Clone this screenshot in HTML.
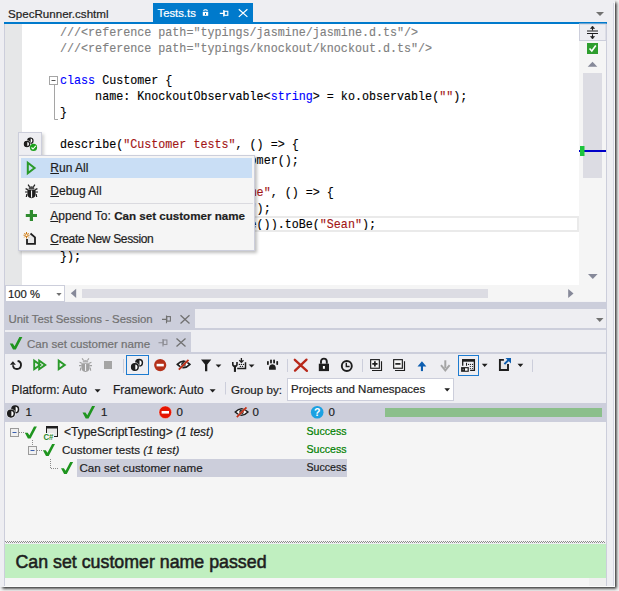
<!DOCTYPE html>
<html><head><meta charset="utf-8">
<style>
*{margin:0;padding:0;box-sizing:border-box}
html,body{width:619px;height:591px;overflow:hidden;background:#F4F4F4}
body{position:relative;font-family:"Liberation Sans",sans-serif;font-size:12px;color:#1E1E1E}
.a{position:absolute}
.t{position:absolute;white-space:pre;line-height:1;-webkit-text-stroke:0.2px currentColor}
.code{position:absolute;left:59.5px;font-family:"Liberation Mono",monospace;font-size:13.5px;transform:scaleX(0.8667);transform-origin:0 0;-webkit-text-stroke:0.15px currentColor;white-space:pre;line-height:16px;color:#000}
.cm{color:#808080}.kw{color:#0000FF}.st{color:#A31515}
svg{position:absolute;overflow:visible}
</style></head><body>
<div class="a" style="left:0;top:0;width:615px;height:587px;background:#EEEEF2;box-shadow:1.5px 1.5px 3px rgba(0,0,0,0.88)"></div>

<!-- document tab bar -->
<div class="t" style="left:8px;top:8px;font-size:11.6px;color:#1E1E1E">SpecRunner.cshtml</div>
<div class="a" style="left:153px;top:3px;width:100px;height:20px;background:#007ACC"></div>
<div class="t" style="left:157.5px;top:8px;font-size:11.3px;color:#fff">Tests.ts</div>
<div class="a" style="left:4px;top:22px;width:603px;height:2px;background:#007ACC"></div>
<svg style="left:596px;top:12px" width="8" height="4"><path d="M0 0H8L4 4Z" fill="#717171"/></svg>

<!-- editor -->
<div class="a" style="left:4px;top:24px;width:1px;height:277px;background:#CCCEDB"></div>
<div class="a" style="left:5px;top:24px;width:17px;height:261px;background:#E6E7E8"></div>
<div class="a" style="left:22px;top:24px;width:557px;height:261px;background:#fff"></div>
<div class="code" style="top:24.5px"><span class="cm">///&lt;reference path="typings/jasmine/jasmine.d.ts"/&gt;</span>
<span class="cm">///&lt;reference path="typings/knockout/knockout.d.ts"/&gt;</span>

<span class="kw">class</span> Customer {
     name: KnockoutObservable&lt;<span class="kw">string</span>&gt; = ko.observable(<span class="st">""</span>);
}

describe(<span class="st">"Customer tests"</span>, () =&gt; {
    <span class="kw">var</span> customer = <span class="kw">new</span> Customer();

    it(<span class="st">"Can set customer name"</span>, () =&gt; {
        customer.name(<span class="st">"Sean"</span>);
        expect(customer.name()).toBe(<span class="st">"Sean"</span>);
    });
});
</div>

<!-- vertical scrollbar -->
<div class="a" style="left:579px;top:24px;width:27px;height:277px;background:#F5F5F5"></div>
<div class="a" style="left:606px;top:24px;width:1px;height:330px;background:#CCCEDB"></div>

<!-- horizontal bar -->

<!-- tool window header -->
<div class="a" style="left:5px;top:301.5px;width:601px;height:7.5px;background:#CCCEDB"></div>
<div class="a" style="left:5px;top:309px;width:190px;height:21px;background:#CCCEDB"></div>
<div class="a" style="left:195px;top:328px;width:411px;height:2px;background:#CCCEDB"></div>
<div class="t" style="left:8.5px;top:314px;font-size:11.4px;color:#717171">Unit Test Sessions - Session</div>
<div class="a" style="left:5px;top:332px;width:186px;height:20px;background:#CCCEDB"></div>
<div class="a" style="left:5px;top:352px;width:601px;height:2px;background:#CCCEDB"></div>
<div class="t" style="left:27px;top:338px;font-size:11.6px;color:#717171">Can set customer name</div>

<!-- toolbar row 2 -->
<div class="t" style="left:11.5px;top:384px;font-size:12px">Platform: Auto</div>
<div class="t" style="left:113px;top:384px;font-size:12px">Framework: Auto</div>
<div class="t" style="left:231px;top:384px;font-size:11.6px">Group by:</div>
<div class="a" style="left:287px;top:378px;width:167px;height:23px;background:#fff;border:1px solid #CCCEDB"></div>
<div class="t" style="left:291px;top:384px;font-size:11.5px">Projects and Namespaces</div>

<!-- status bar -->
<div class="a" style="left:5px;top:403px;width:601px;height:19.5px;background:#CCCEDB"></div>
<div class="a" style="left:385px;top:408px;width:217px;height:9px;background:#8BBF8B"></div>

<!-- tree -->
<div class="a" style="left:5px;top:422px;width:601px;height:119px;background:#F5F5F5"></div>
<div class="a" style="left:77px;top:459px;width:270px;height:18px;background:#CCCEDB"></div>
<div class="t" style="left:64px;top:426px;font-size:12px">&lt;TypeScriptTesting&gt; <i>(1 test)</i></div>
<div class="t" style="left:62px;top:444px;font-size:11.6px">Customer tests <i>(1 test)</i></div>
<div class="t" style="left:79.5px;top:462px;font-size:11.6px">Can set customer name</div>
<div class="t" style="left:306.5px;top:426px;font-size:10.6px;color:#008000">Success</div>
<div class="t" style="left:306.5px;top:444px;font-size:10.6px;color:#008000">Success</div>
<div class="t" style="left:306.5px;top:462px;font-size:10.6px;color:#1E1E1E">Success</div>

<!-- bottom -->
<svg style="left:5px;top:541px" width="600" height="2.5"><defs><pattern id="dotpat" width="2" height="2" patternUnits="userSpaceOnUse"><rect width="2" height="2" fill="#F5F5F5"/><rect x="0" y="0" width="1" height="1" fill="#8A8A8A"/><rect x="1" y="1" width="1" height="1" fill="#8A8A8A"/></pattern></defs><rect width="600" height="2" fill="url(#dotpat)"/></svg>
<div class="a" style="left:5px;top:543.5px;width:601px;height:34.5px;background:#C0EFC0"></div>
<div class="t" style="left:15.5px;top:554px;font-size:17.8px;-webkit-text-stroke:0.55px #1E1E1E;color:#1E1E1E">Can set customer name passed</div>
<div class="a" style="left:5px;top:578px;width:601px;height:8.5px;background:#F5F5F5"></div>
<div class="a" style="left:589px;top:578px;width:17px;height:8.5px;background:#EFEFEF"></div>
<div class="a" style="left:606px;top:354px;width:1px;height:233px;background:#CCCEDB"></div>
<div class="a" style="left:4px;top:301px;width:1px;height:286px;background:#CCCEDB"></div>


<!-- ICON LAYER 1 -->
<svg style="left:0;top:0" width="619" height="591" viewBox="0 0 619 591">
<defs>
 <path id="chk" d="M0 6.2H2.9L4.6 8.8L9.2 0H12.1L5.8 11.9H3.1Z" fill="#1F951F"/>
 <g id="bug">
  <path d="M3.1 0.7L4.6 2.9M9.9 0.7L8.4 2.9M0.6 4.6L2.8 5.6M12.4 4.6L10.2 5.6M0 8H2.6M13 8H10.4M1.3 13L1.9 10M11.7 13L11.1 10" stroke="currentColor" stroke-width="1.2" fill="none"/>
  <path d="M3.6 5A2.9 2.7 0 0 1 9.4 5Z" fill="currentColor" opacity="0.8"/>
  <path d="M2.4 5.6H10.6V9.6Q10.6 14.2 6.5 14.3Q2.4 14.2 2.4 9.6Z" fill="currentColor"/>
 </g>
 <g id="circ">
  <circle cx="0" cy="0" r="3.3" fill="#fff" stroke="#1E1E1E" stroke-width="1.5"/>
  <path d="M0.4 -3.6A3.6 3.6 0 0 0 0.4 3.6Z" fill="#1E1E1E"/>
 </g>
 <g id="circs">
  <use href="#circ" x="4.2" y="-4.2"/>
  <circle cx="0" cy="0" r="4.7" fill="#fff" opacity="0.75"/>
  <use href="#circ" x="0" y="0"/>
 </g>
</defs>
<!-- tab icons -->
<path d="M203.5 10.8A2.2 1.8 0 0 1 207.5 10.8" stroke="#fff" stroke-width="1.2" fill="none"/>
<rect x="202.8" y="11.8" width="5.4" height="4" fill="#fff"/>
<rect x="205" y="13" width="1" height="2" fill="#007ACC"/>
<path d="M219.8 13.3H223.5M223.8 10.1V16.6" stroke="#fff" stroke-width="1.2"/>
<rect x="224.2" y="11.3" width="3.6" height="4" fill="none" stroke="#fff" stroke-width="1.1"/>
<path d="M238.8 9.3L247.4 16.9M247.4 9.3L238.8 16.9" stroke="#fff" stroke-width="1.2"/>

<!-- outlining -->
<rect x="49.5" y="76.5" width="8" height="8" fill="#fff" stroke="#A5A5A5"/>
<path d="M51.5 80.5H55.5" stroke="#555" stroke-width="1"/>
<path d="M54.5 85V119.5H58" stroke="#A5A5A5" fill="none"/>

<!-- current line box -->
<rect x="240" y="217" width="338" height="14" fill="none" stroke="#EAEAEA" stroke-width="2"/>

<!-- vertical scrollbar -->
<rect x="579.5" y="24" width="26.5" height="16.5" fill="#EEEEF2" stroke="#CCCEDB"/>
<path d="M587 31H598M587 33.5H598M592.5 27V30.2M592.5 34.3V38" stroke="#1E1E1E" stroke-width="1.1"/>
<path d="M590.5 28.5L592.5 26L594.5 28.5ZM590.5 36.5L592.5 39L594.5 36.5Z" fill="#1E1E1E" stroke="#1E1E1E" stroke-width="0.6"/>
<rect x="587" y="43" width="11" height="11" fill="#2E9E2E"/>
<path d="M589.5 48.5L591.8 51L595.8 45.5" stroke="#fff" stroke-width="1.6" fill="none"/>
<path d="M587.7 66.8L592.5 61.7L597.3 66.8Z" fill="#868999"/>
<rect x="583" y="73" width="19" height="105" fill="#DCDCE3"/>
<rect x="579" y="150" width="27" height="2" fill="#0000C8"/>
<rect x="580" y="146" width="4.5" height="10" fill="#1CC43C"/>
<path d="M588 274L597.6 274L592.8 279Z" fill="#868999"/>

<!-- horizontal scrollbar -->
<rect x="65" y="285" width="541" height="16.5" fill="#F5F5F5"/>
<rect x="5.5" y="285.5" width="59" height="16" fill="#fff" stroke="#CCCEDB"/>
<path d="M56.3 293H61.6L59 296Z" fill="#717171"/>
<path d="M76.2 288.7V298L70.8 293.35Z" fill="#868999"/>
<rect x="82" y="289" width="406" height="9" fill="#DCDCE3"/>
<path d="M568.2 288.9V298L573.5 293.45Z" fill="#868999"/>

<!-- tool window tab icons -->
<path d="M162 319.4H166M166.5 315.5V323.3" stroke="#717171" stroke-width="1.1"/>
<rect x="166.8" y="316.6" width="3.6" height="4.5" fill="none" stroke="#717171" stroke-width="1.1"/>
<path d="M180.5 315.3L189.5 323.4M189.5 315.3L180.5 323.4" stroke="#717171" stroke-width="1.3"/>
<path d="M596 318H603.5L599.75 322Z" fill="#717171"/>
<path d="M158.5 342.8H162.5M163 339V346.6" stroke="#8E8E95" stroke-width="1.1"/>
<rect x="163.3" y="340" width="3.6" height="4.5" fill="none" stroke="#8E8E95" stroke-width="1.1"/>
<path d="M176.5 338.5L185.5 346.5M185.5 338.5L176.5 346.5" stroke="#717171" stroke-width="1.3"/>
<use href="#chk" transform="translate(9.8 337) scale(1.04)"/>

<!-- toolbar row 1 -->
<path d="M17.6 361A4 4 0 1 1 13 365.2" stroke="#1E1E1E" stroke-width="1.9" fill="none"/>
<path d="M9.9 364.8L15.9 364.8L12.9 361.2Z" fill="#1E1E1E"/>
<path d="M34.2 360.6V369.2L40.3 364.9Z" stroke="#2A9A2A" stroke-width="1.9" fill="none" stroke-linejoin="miter"/>
<path d="M39.2 360.6V369.2L45.3 364.9Z" stroke="#2A9A2A" stroke-width="1.9" fill="none"/>
<path d="M58.7 360.6V369.2L64.8 364.9Z" stroke="#2A9A2A" stroke-width="1.9" fill="none"/>
<use href="#bug" transform="translate(79 357.6)" style="color:#A0A0A0"/>
<rect x="85" y="364" width="1.1" height="7" fill="#EEEEF2"/>
<rect x="104" y="361" width="8" height="8" fill="#A5A5A5"/>
<rect x="123" y="359" width="1" height="14" fill="#CCCEDB"/>
<rect x="126.5" y="355.5" width="22" height="19" fill="none" stroke="#1D7BD0"/>
<use href="#circs" transform="translate(134.9 367)"/>
<circle cx="160.2" cy="365.1" r="6.1" fill="#B5311A"/>
<rect x="156.6" y="363.8" width="7.2" height="2.6" fill="#fff"/>
<path d="M177.3 364.4Q183.5 357.8 189.9 364.4Q183.5 371 177.3 364.4Z" fill="#fff" stroke="#1E1E1E" stroke-width="1.6"/>
<circle cx="183.5" cy="364.4" r="2.3" fill="#1E1E1E"/>
<path d="M178.8 369.6L188.5 359.8" stroke="#fff" stroke-width="2.6" opacity="0.5"/>
<path d="M178.8 369.6L188.5 359.8" stroke="#C0311A" stroke-width="1.9"/>
<path d="M201 359.5H211.3L207.3 364.5V371.2H205V364.5Z" fill="#1E1E1E"/>
<path d="M215.6 364.4H221.4L218.5 367.6Z" fill="#1E1E1E"/>
<path d="M232.8 362V364.2Q232.8 366.2 234.9 366.4M237 362V364.2Q237 366.2 234.9 366.4" stroke="#1E1E1E" stroke-width="1.6" fill="none"/>
<rect x="233.9" y="365.5" width="2.1" height="6.4" fill="#1E1E1E"/>
<path d="M245.5 362.3V368.4H237.2" stroke="#1E1E1E" stroke-width="1.5" fill="none"/>
<path d="M241.4 358V362M239.3 360.3L241.4 362.4L243.5 360.3" stroke="#1E1E1E" stroke-width="1.3" fill="none"/>
<g fill="#1E1E1E"><circle cx="239.4" cy="364.4" r="0.7"/><circle cx="241.4" cy="364.4" r="0.7"/><circle cx="243.5" cy="364.4" r="0.7"/><circle cx="240.4" cy="366.4" r="0.7"/><circle cx="242.5" cy="366.4" r="0.7"/></g>
<path d="M248.7 364.4H254.5L251.6 367.6Z" fill="#1E1E1E"/>
<g fill="#1E1E1E">
 <rect x="267" y="361" width="1.8" height="4" rx="0.8"/>
 <rect x="270.1" y="359.5" width="1.8" height="4" rx="0.8"/>
 <rect x="273.2" y="359.5" width="1.8" height="4" rx="0.8"/>
 <rect x="276.3" y="361" width="1.8" height="4" rx="0.8"/>
 <path d="M269 369.8Q268.5 364.6 272.4 364.3Q276.3 364.6 275.8 369.8Z"/>
</g>
<rect x="287" y="359" width="1" height="13" fill="#CCCEDB"/>
<path d="M295 370.6L306.5 359.6M294.8 359.8L306.9 370.9" stroke="#B8281A" stroke-width="2.3" stroke-linecap="round"/>
<path d="M321 363.8V361.5A2.9 2.9 0 0 1 326.8 361.5V363.8" stroke="#1E1E1E" stroke-width="1.9" fill="none"/>
<rect x="318.8" y="363.7" width="10.2" height="7.4" fill="#1E1E1E"/>
<rect x="322.9" y="366" width="2" height="2.8" fill="#fff"/>
<circle cx="346.8" cy="366" r="5" stroke="#1E1E1E" stroke-width="1.9" fill="none"/>
<path d="M346.3 362.8V366.5H349.6" stroke="#1E1E1E" stroke-width="1.4" fill="none"/>
<rect x="362" y="359" width="1" height="13" fill="#CCCEDB"/>
<path d="M381.5 361.2V370.5H372" stroke="#1E1E1E" stroke-width="1.15" fill="none"/>
<rect x="370.65" y="359.65" width="8.7" height="8.6" fill="#F8F8F8" stroke="#1E1E1E" stroke-width="1.15"/>
<path d="M372.3 363.9H377.5M374.9 361.3V366.5" stroke="#1E1E1E" stroke-width="1.7"/>
<path d="M404.5 361.2V370.5H395" stroke="#1E1E1E" stroke-width="1.15" fill="none"/>
<rect x="393.65" y="359.65" width="8.7" height="8.6" fill="#F8F8F8" stroke="#1E1E1E" stroke-width="1.15"/>
<path d="M395.3 363.9H400.5" stroke="#1E1E1E" stroke-width="1.7"/>
<path d="M421.95 371.1V364.5" stroke="#0E5EB0" stroke-width="2.1"/>
<path d="M417.5 366.4L421.95 361.3L426.4 366.4Z" fill="#0E5EB0"/>
<path d="M445.3 360.3V368" stroke="#A5A5A5" stroke-width="2"/>
<path d="M441 365.2L445.3 370.4L449.6 365.2" stroke="#A5A5A5" stroke-width="1.9" fill="none"/>
<rect x="458.5" y="355.5" width="20" height="20" fill="none" stroke="#1D7BD0"/>
<path d="M462.7 365.7V359.8H474.4V370.3H470.1" stroke="#1E1E1E" stroke-width="1.3" fill="none"/>
<rect x="462" y="359.1" width="13" height="2.6" fill="#1E1E1E"/>
<rect x="466" y="362.8" width="1" height="3" fill="#1E1E1E"/>
<g fill="#1E1E1E"><circle cx="468.5" cy="364.4" r="0.6"/><circle cx="470.4" cy="364.4" r="0.6"/><circle cx="472.5" cy="364.4" r="0.6"/><circle cx="470.4" cy="366.5" r="0.6"/><circle cx="472.5" cy="366.5" r="0.6"/><circle cx="470.4" cy="368.5" r="0.6"/><circle cx="472.5" cy="368.5" r="0.6"/></g>
<rect x="461.1" y="367.1" width="7.7" height="4.7" fill="#1E1E1E"/>
<rect x="465" y="368.3" width="2.6" height="2.4" fill="#fff"/>
<rect x="462.6" y="368.8" width="1.2" height="1.4" fill="#888"/>
<path d="M481.8 363.8H487.6L484.7 367Z" fill="#1E1E1E"/>
<rect x="500.5" y="360.5" width="7" height="8.6" fill="#E6E6E6"/>
<path d="M503.9 359.9H499.9V370H508V364.1" stroke="#1E1E1E" stroke-width="1.9" fill="none"/>
<path d="M504.4 364.2L508.6 360" stroke="#0E5FB0" stroke-width="1.9"/>
<path d="M505.5 357.9H511V363.4Z" fill="#0E5FB0"/>
<path d="M517.5 363.8H523.3L520.4 367Z" fill="#1E1E1E"/>
<rect x="532" y="359.5" width="1" height="12.5" fill="#CCCEDB"/>

<!-- toolbar row 2 -->
<path d="M94.6 389.3H100.6L97.6 392.6Z" fill="#1E1E1E"/>
<path d="M209.6 389.3H215.6L212.6 392.6Z" fill="#1E1E1E"/>
<rect x="225" y="382" width="1" height="12.5" fill="#CCCEDB"/>
<path d="M444.4 388.3H450L447.2 391.5Z" fill="#1E1E1E"/>

<!-- status bar icons -->
<use href="#circs" transform="translate(11 413.6)"/>
<use href="#chk" transform="translate(82.5 406) scale(1.04)"/>
<circle cx="165.3" cy="412.3" r="6.3" fill="#E51400"/>
<circle cx="165.3" cy="412.3" r="6.3" fill="none" stroke="#fff" stroke-width="0.6" opacity="0.6"/>
<rect x="161.6" y="411" width="7.4" height="2.6" fill="#fff"/>
<path d="M235.3 412Q241.5 405.4 247.9 412Q241.5 418.6 235.3 412Z" fill="#fff" stroke="#1E1E1E" stroke-width="1.6"/>
<circle cx="241.5" cy="412" r="2.3" fill="#1E1E1E"/>
<path d="M236.8 417.2L246.5 407.4" stroke="#fff" stroke-width="2.6" opacity="0.5"/>
<path d="M236.8 417.2L246.5 407.4" stroke="#C0311A" stroke-width="1.9"/>
<circle cx="317.2" cy="412.2" r="6.3" fill="#1BA1E2"/>
<text x="317.2" y="416.4" font-family="Liberation Sans" font-weight="bold" font-size="10.5" fill="#fff" text-anchor="middle">?</text>

<!-- tree icons -->
<rect x="10.5" y="428.5" width="8" height="8" fill="#F0F0F0" stroke="#9A9A9A" stroke-width="1"/>
<path d="M12.5 432.5H16.5" stroke="#3B5FAE" stroke-width="1"/>
<path d="M19 432.5H24" stroke="#8A8A8A" stroke-dasharray="1 1"/>
<use href="#chk" transform="translate(24.8 426.5)"/>
<rect x="46.5" y="426.5" width="11" height="10" fill="#E8E8E8" stroke="#1E1E1E" stroke-width="1"/>
<rect x="46" y="426" width="12" height="2.5" fill="#1E1E1E"/>
<rect x="43.5" y="433" width="10.5" height="6.5" fill="#F5F5F5"/>
<text x="43.4" y="439.6" font-family="Liberation Sans" font-weight="bold" font-size="8.6" fill="#2A8A2A" textLength="10" lengthAdjust="spacingAndGlyphs">C#</text>
<path d="M32.5 440V446" stroke="#8A8A8A" stroke-dasharray="1 1"/>
<rect x="28.5" y="446.5" width="8" height="8" fill="#F0F0F0" stroke="#9A9A9A" stroke-width="1"/>
<path d="M30.5 450.5H34.5" stroke="#3B5FAE" stroke-width="1"/>
<path d="M37 450.5H42" stroke="#8A8A8A" stroke-dasharray="1 1"/>
<use href="#chk" transform="translate(42.9 444)"/>
<path d="M50.5 459V468.5H59" stroke="#8A8A8A" stroke-dasharray="1 1" fill="none"/>
<use href="#chk" transform="translate(61 462)"/>
</svg>


<!-- texts over icon layer -->
<div class="t" style="left:8px;top:289px;font-size:11.3px;color:#1E1E1E">100 %</div>
<div class="t" style="left:25.5px;top:407px;font-size:11.5px">1</div>
<div class="t" style="left:101px;top:407px;font-size:11.5px">1</div>
<div class="t" style="left:176.5px;top:407px;font-size:11.5px">0</div>
<div class="t" style="left:252.5px;top:407px;font-size:11.5px">0</div>
<div class="t" style="left:328.5px;top:407px;font-size:11.5px">0</div>

<!-- gutter icon + context menu -->
<div class="a" style="left:18px;top:132px;width:24px;height:24px;background:#EEEEF2;border:1px solid #CCCEDB;box-shadow:2px 2px 3px rgba(0,0,0,0.18)"></div>
<div class="a" style="left:18px;top:155px;width:236.5px;height:96px;background:#F5F5F5;border:1px solid #CCCEDB;box-shadow:2px 2px 3px rgba(0,0,0,0.25)"></div>
<div class="a" style="left:21px;top:158px;width:231px;height:20px;background:#C9DEF5"></div>
<div class="a" style="left:50px;top:203px;width:203px;height:1px;background:#DADADF"></div>
<div class="t" style="left:50.3px;top:162px;font-size:12px"><u>R</u>un All</div>
<div class="t" style="left:50.3px;top:185px;font-size:12px"><u>D</u>ebug All</div>
<div class="t" style="left:50.3px;top:209.5px;font-size:12px"><u>A</u>ppend To: <b style="font-size:11.6px">Can set customer name</b></div>
<div class="t" style="left:50.3px;top:233px;font-size:12px;letter-spacing:-0.35px"><u>C</u>reate New Session</div>
<svg style="left:0;top:0" width="619" height="591" viewBox="0 0 619 591">
<use href="#circs" transform="translate(27 144) scale(0.8)"/>
<circle cx="33.5" cy="147.4" r="3.6" fill="#1AA01A"/>
<path d="M31.5 147.5L33 149L35.8 145.8" stroke="#fff" stroke-width="1.1" fill="none"/>
<path d="M27.8 162.7V173.3L34.6 168Z" stroke="#2A9A2A" stroke-width="2" fill="none"/>
<use href="#bug" transform="translate(25 184)" style="color:#1E1E1E"/>
<rect x="31" y="190.5" width="1.1" height="7" fill="#F5F5F5"/>
<path d="M25.8 215.5H37M31.4 210V221" stroke="#2E8B2E" stroke-width="3.2"/>
<path d="M30.5 233.5L35 237.3V243.8H27V239" stroke="#1E1E1E" stroke-width="1.8" fill="#E8E8E8"/>
<g stroke="#D17B0F" stroke-width="1"><path d="M26.5 232V238.5M23.5 235.2H29.5M24.3 233L28.7 237.4M28.7 233L24.3 237.4"/></g>
<circle cx="26.5" cy="235.2" r="0.9" fill="#F5F5F5"/>
</svg>

<!-- window edges -->
<div class="a" style="left:613px;top:3px;width:1px;height:583px;background:#D5D6E2"></div>
<div class="a" style="left:614px;top:2px;width:1px;height:585px;background:#FAFAFC"></div>
<div class="a" style="left:4px;top:586px;width:611px;height:1px;background:#FCFCFC"></div>
</body></html>
